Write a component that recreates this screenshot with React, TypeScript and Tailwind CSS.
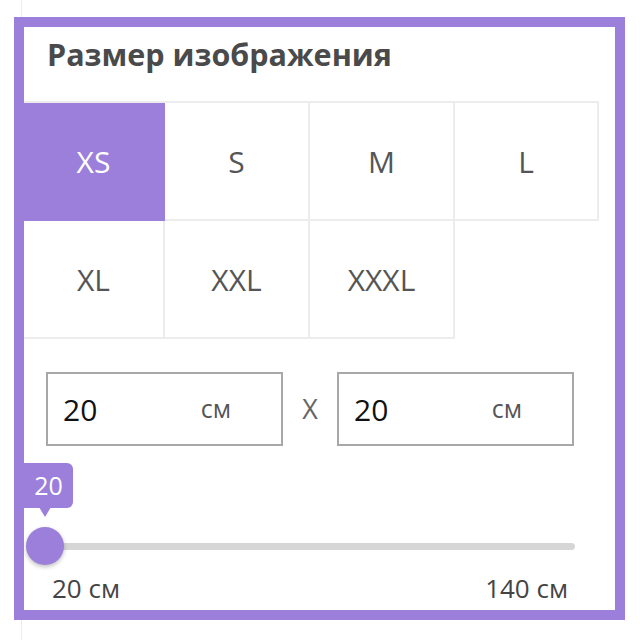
import React from "react";

const SIZES = ["XS", "S", "M", "L", "XL", "XXL", "XXXL"];

function SizeCell({ label, active }: { label: string; active: boolean }) {
  return (
    <div
      className={`h-[118px] flex items-center justify-center border-r-2 border-b-2 text-[30px] ${
        active ? "bg-[#9b7fdb] border-[#9b7fdb] text-white" : "border-[#ececec] text-[#555]"
      }`}
    >
      {label}
    </div>
  );
}

function SizeInput({ value }: { value: number }) {
  return (
    <div className="w-[237px] h-[74px] border-2 border-[#a8a8a8] flex items-center justify-between pl-[15px] pr-[50px]">
      <span className="text-[30px] text-[#111]">{value}</span>
      <span className="text-[25px] text-[#555]">см</span>
    </div>
  );
}

export default function App() {
  const width = 20;
  const height = 20;

  return (
    <div className="relative w-[640px] h-[640px] bg-white overflow-hidden font-['Open_Sans',sans-serif]">
      {/* faint guide line behind the frame */}
      <div className="absolute left-[21px] top-0 h-full w-px bg-[#ececec]" />

      <div className="relative ml-[14px] mt-[17px] w-[611px] h-[603px] border-[10px] border-[#9b7fdb] bg-white">
        <div className="relative h-full overflow-hidden">
          {/* Header */}
          <div className="h-[74px] pl-[23px] pt-[8px]">
            <h2 className="text-[30.5px] leading-[38px] font-bold text-[#4a4a4a]">Размер изображения</h2>
          </div>

          {/* Size grid */}
          <div className="grid grid-cols-[141px_145px_145px_144px] w-[575px] border-t-2 border-[#ececec]">
            {SIZES.map((s) => (
              <SizeCell key={s} label={s} active={s === "XS"} />
            ))}
          </div>

          {/* Dimensions */}
          <div className="flex items-center mt-[33px] pl-[22px]">
            <SizeInput value={width} />
            <div className="w-[54px] text-center text-[27px] text-[#666]">X</div>
            <SizeInput value={height} />
          </div>

          {/* Slider */}
          <div className="relative h-[164px]">
            <div className="absolute left-[-7px] top-[17px] w-[56px] h-[45px] rounded-md bg-[#9b7fdb] flex items-center justify-center pl-[7px]">
              <span className="text-[25px] text-white leading-none">20</span>
            </div>
            <div className="absolute left-[15px] top-[61px] w-0 h-0 border-l-[6px] border-r-[6px] border-t-[10px] border-l-transparent border-r-transparent border-t-[#9b7fdb]" />
            <div className="absolute left-[21px] top-[97px] w-[530px] h-[7px] rounded-full bg-[#d6d6d6]" />
            <div className="absolute left-[2px] top-[81px] w-[38px] h-[38px] rounded-full bg-[#9b7fdb] shadow-[0_2px_4px_rgba(0,0,0,0.25)]" />
            <div className="flex justify-between pt-[125px] pl-[28px] pr-[47px] text-[26px] leading-[35px] text-[#444]">
              <span>20 см</span>
              <span>140 см</span>
            </div>
          </div>
        </div>
      </div>
    </div>
  );
}
